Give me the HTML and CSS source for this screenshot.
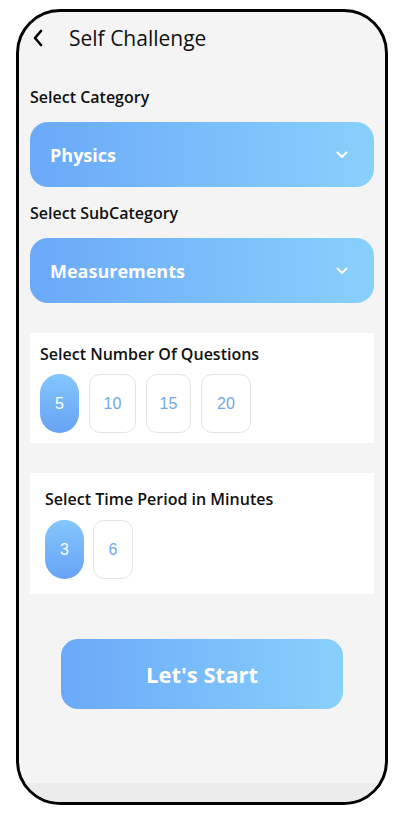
FILE: index.html
```html
<!DOCTYPE html>
<html>
    <head>
        <meta charset="UTF-8" />
        <title>Self Challenge</title>
        <link rel="stylesheet" href="styles.css">
    </head>

    <body>
        <div class="phone">
            <div class="header">
                <svg class="back" width="12" height="18" viewBox="0 0 12 18">
                    <polyline points="9,2 3,9 9,16" fill="none" stroke="#000" stroke-width="2.6" stroke-linecap="round" stroke-linejoin="round" />
                </svg>
                <h1>Self Challenge</h1>
            </div>

            <div class="content">
                <p class="label label-first">Select Category</p>
                <div class="dropdown">
                    <span>Physics</span>
                    <svg width="12" height="8" viewBox="0 0 12 8">
                        <polyline points="1.5,1.5 6,6 10.5,1.5" fill="none" stroke="#fff" stroke-width="2" stroke-linecap="round" stroke-linejoin="round" />
                    </svg>
                </div>

                <p class="label">Select SubCategory</p>
                <div class="dropdown">
                    <span>Measurements</span>
                    <svg width="12" height="8" viewBox="0 0 12 8">
                        <polyline points="1.5,1.5 6,6 10.5,1.5" fill="none" stroke="#fff" stroke-width="2" stroke-linecap="round" stroke-linejoin="round" />
                    </svg>
                </div>

                <div class="card card-questions">
                    <p class="card-title">Select Number Of Questions</p>
                    <div class="chips">
                        <div class="chip selected">5</div>
                        <div class="chip">10</div>
                        <div class="chip narrow">15</div>
                        <div class="chip wide">20</div>
                    </div>
                </div>

                <div class="card card-time">
                    <p class="card-title">Select Time Period in Minutes</p>
                    <div class="chips">
                        <div class="chip selected">3</div>
                        <div class="chip small">6</div>
                    </div>
                </div>

                <button class="start">Let's Start</button>
            </div>

            <div class="bottom-bar"></div>
        </div>
    </body>
</html>
```

FILE: styles.css
```css
* {
    margin: 0;
    padding: 0;
    box-sizing: border-box;
}

body {
    background-color: #ffffff;
    font-family: "Open Sans", "Noto Sans", sans-serif;
    color: #111;
}

.phone {
    width: 372px;
    height: 796px;
    margin: 9px 0 0 16px;
    border: 3px solid #000;
    border-radius: 44px;
    background-color: #f4f4f4;
    overflow: hidden;
    display: flex;
    flex-direction: column;
}

.header {
    display: flex;
    align-items: center;
    padding: 12px 0 0 13px;
    height: 40px;
}

.back {
    display: block;
}

.header h1 {
    font-size: 21px;
    font-weight: 400;
    line-height: 28px;
    margin-left: 25px;
}

.content {
    padding: 0 11px;
    display: flex;
    flex-direction: column;
}

.label {
    font-size: 16px;
    font-weight: 600;
    line-height: 20px;
    margin-top: 16px;
}

.label-first {
    margin-top: 35px;
}

.dropdown {
    margin-top: 15px;
    height: 65px;
    border-radius: 18px;
    background: linear-gradient(to right, #6aa9f8, #88d0fc);
    display: flex;
    align-items: center;
    justify-content: space-between;
    padding: 0 26px 0 20px;
    color: #fff;
    font-size: 18px;
    font-weight: 700;
}

.dropdown svg {
    display: block;
}

.card {
    background-color: #fff;
    margin-top: 30px;
}

.card-questions {
    padding: 11px 10px 10px;
}

.card-time {
    padding: 16px 15px 15px;
}

.card-title {
    font-size: 16px;
    font-weight: 600;
    line-height: 20px;
}

.chips {
    display: flex;
    gap: 10px;
    margin-top: 10px;
}

.card-time .chips {
    margin-top: 11px;
    gap: 9px;
}

.chip {
    width: 47px;
    height: 59px;
    border: 1.5px solid #e4e4e4;
    border-radius: 11px;
    display: flex;
    align-items: center;
    justify-content: center;
    font-family: "Liberation Sans", Arial, sans-serif;
    font-size: 16px;
    color: #72a8e6;
}

.chip.narrow {
    width: 45px;
}

.chip.wide {
    width: 50px;
}

.chip.small {
    width: 40px;
}

.chip.selected {
    width: 39px;
    border: none;
    border-radius: 20px;
    background: linear-gradient(to bottom, #84c6fc, #66a3f6);
    color: #fff;
}

.start {
    margin: 45px auto 0;
    width: 282px;
    height: 70px;
    border: none;
    border-radius: 17px;
    background: linear-gradient(to right, #6aa9f8, #88d0fc);
    color: #fff;
    font-family: "Open Sans", "Noto Sans", sans-serif;
    font-size: 22px;
    font-weight: 700;
}

.bottom-bar {
    margin-top: auto;
    height: 19px;
    background-color: #ebebeb;
}
```
